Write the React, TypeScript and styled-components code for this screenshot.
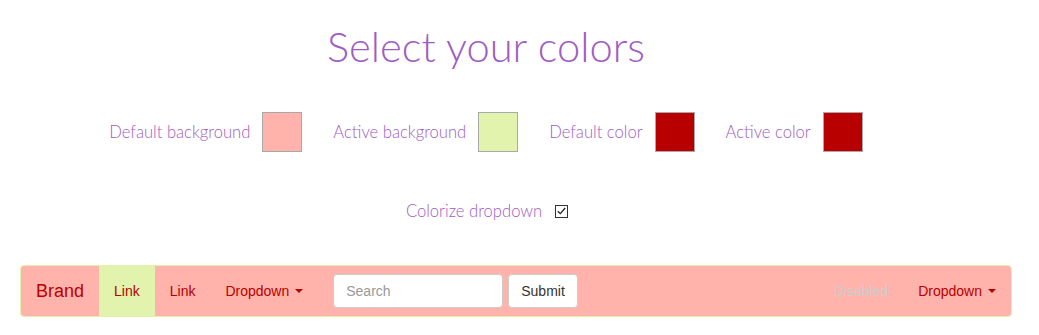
import React, { useState } from 'react';
import styled, { createGlobalStyle } from 'styled-components';

const GlobalStyle = createGlobalStyle`
    html, body {
        margin: 0;
        padding: 0;
        background: #ffffff;
    }
    * {
        box-sizing: border-box;
    }
`;

const PINK = '#ffb3ab';
const GREEN = '#e1f3ad';
const RED = '#b80000';
const PURPLE = '#a05cc4';

const Page = styled.div`
    width: 1039px;
    padding-top: 24px;
`;

const Picker = styled.div`
    width: 972px;
    display: flex;
    flex-direction: column;
    align-items: center;
    font-family: Lato, 'Open Sans', sans-serif;
    font-weight: 300;
    color: ${PURPLE};
`;

const Title = styled.h1`
    margin: 0;
    font-size: 41.7px;
    line-height: 44px;
    font-weight: 300;
`;

const SwatchRow = styled.div`
    display: flex;
    align-items: center;
    gap: 31px;
    margin-top: 44px;
`;

const Field = styled.label`
    display: flex;
    align-items: center;
    gap: 12px;
    font-size: 16.6px;
    cursor: pointer;
`;

const Swatch = styled.span<{ color: string }>`
    width: 40px;
    height: 40px;
    border: 1px solid #a9a9a9;
    background: ${(props) => props.color};
`;

const CheckRow = styled.label`
    display: flex;
    align-items: center;
    gap: 13px;
    margin-top: 49px;
    margin-left: 2px;
    height: 20px;
    font-size: 16.6px;
    cursor: pointer;
`;

const CheckBox = styled.span`
    width: 13px;
    height: 13px;
    border: 1px solid #333;
    background: #fff;
    display: flex;
    align-items: center;
    justify-content: center;
`;

const Navbar = styled.nav`
    display: flex;
    align-items: stretch;
    width: 992px;
    height: 52px;
    margin: 44px 0 0 20px;
    background: ${PINK};
    border: 1px solid ${GREEN};
    border-radius: 4px;
    font-family: 'Liberation Sans', Arial, sans-serif;
    font-size: 14px;
    overflow: hidden;
`;

const Brand = styled.a`
    padding: 15px;
    font-size: 18px;
    line-height: 20px;
    color: ${RED};
    text-decoration: none;
`;

const NavList = styled.ul<{ right?: boolean }>`
    display: flex;
    list-style: none;
    margin: 0;
    margin-left: ${(props) => (props.right ? 'auto' : '0')};
    padding: 0;
`;

const NavLink = styled.a<{ active?: boolean; disabled?: boolean }>`
    display: flex;
    align-items: center;
    height: 100%;
    padding: 15px;
    line-height: 20px;
    color: ${(props) => (props.disabled ? '#cccccc' : RED)};
    background: ${(props) => (props.active ? GREEN : 'transparent')};
    text-decoration: none;
`;

const Caret = styled.span`
    display: inline-block;
    width: 0;
    height: 0;
    margin-left: 6px;
    border-top: 4px solid ${RED};
    border-left: 4px solid transparent;
    border-right: 4px solid transparent;
`;

const SearchForm = styled.form`
    display: flex;
    align-items: center;
    gap: 5px;
    padding: 0 15px;
`;

const SearchInput = styled.input`
    width: 170px;
    height: 34px;
    padding: 6px 12px;
    border: 1px solid #cccccc;
    border-radius: 4px;
    font-family: 'Liberation Sans', Arial, sans-serif;
    font-size: 14px;
    color: #555;
    background: #fff;
    outline: none;
    &::placeholder {
        color: #999;
    }
`;

const SubmitButton = styled.button`
    height: 34px;
    padding: 6px 12px;
    border: 1px solid #cccccc;
    border-radius: 4px;
    background: #fff;
    color: #333;
    font-family: 'Liberation Sans', Arial, sans-serif;
    font-size: 14px;
`;

const colors = [
    { label: 'Default background', value: PINK },
    { label: 'Active background', value: '#e2f3ae' },
    { label: 'Default color', value: RED },
    { label: 'Active color', value: RED },
];

function App() {
    const [colorize, setColorize] = useState(true);

    return (
        <Page>
            <GlobalStyle />
            <Picker>
                <Title>Select your colors</Title>
                <SwatchRow>
                    {colors.map((c) => (
                        <Field key={c.label}>
                            {c.label}
                            <Swatch color={c.value} />
                        </Field>
                    ))}
                </SwatchRow>
                <CheckRow onClick={() => setColorize(!colorize)}>
                    Colorize dropdown
                    <CheckBox>
                        {colorize && (
                            <svg width="9" height="8" viewBox="0 0 9 8">
                                <path d="M0.8 4.2 L3.3 6.6 L8.2 1" stroke="#222" strokeWidth="1.3" fill="none" />
                            </svg>
                        )}
                    </CheckBox>
                </CheckRow>
            </Picker>
            <Navbar>
                <Brand href="#">Brand</Brand>
                <NavList>
                    <li><NavLink href="#" active>Link</NavLink></li>
                    <li><NavLink href="#">Link</NavLink></li>
                    <li><NavLink href="#">Dropdown<Caret /></NavLink></li>
                </NavList>
                <SearchForm onSubmit={(e) => e.preventDefault()}>
                    <SearchInput placeholder="Search" />
                    <SubmitButton type="submit">Submit</SubmitButton>
                </SearchForm>
                <NavList right>
                    <li><NavLink disabled>Disabled</NavLink></li>
                    <li><NavLink href="#">Dropdown<Caret /></NavLink></li>
                </NavList>
            </Navbar>
        </Page>
    );
}

export default App;
